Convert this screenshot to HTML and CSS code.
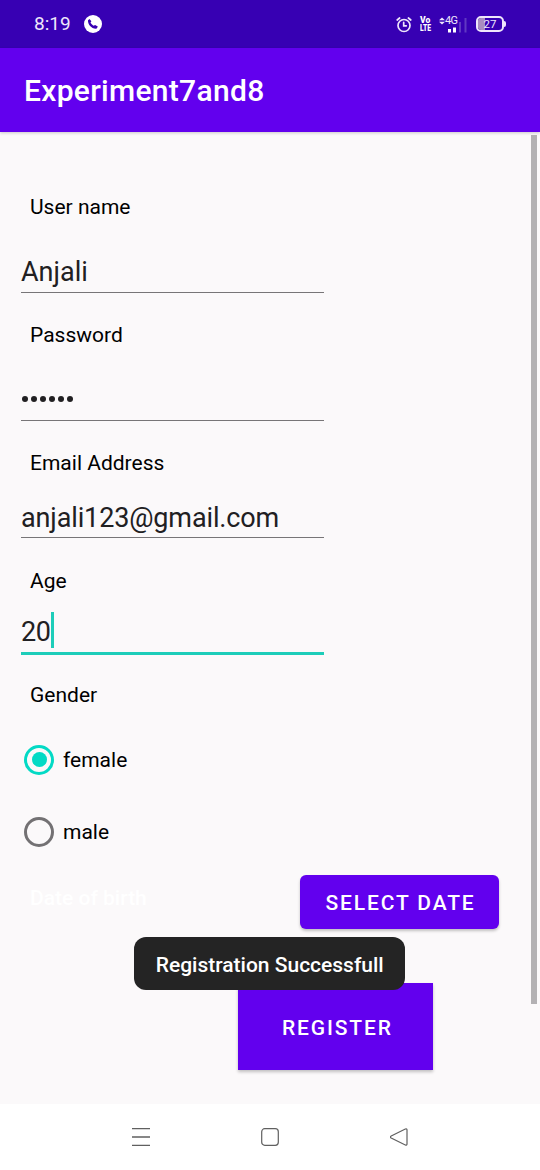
FILE: index.html
```html
<!DOCTYPE html>
<html lang="en">
<head>
<meta charset="utf-8">
<title>Experiment7and8</title>
<link rel="stylesheet" href="styles.css">
</head>
<body>
<div class="screen">
  <header class="status">
    <span class="clock">8:19</span>
    <svg class="call" width="18" height="18" viewBox="0 0 18 18"><circle cx="9" cy="9" r="9" fill="#fff"/><path d="M4 5.300 5.500 4l1.900 2.300-.9 1.300c.8 1.500 1.700 2.400 3.100 3.100l1.500-.7 2.700 1.600-1 2C8 14.300 3.600 9.800 4 5.300z" fill="#3700b3"/></svg>
    <div class="indicators">
      <svg class="alarm" width="16" height="17" viewBox="0 0 16 17" fill="none" stroke="#eee6fb" stroke-width="1.700" stroke-linecap="round"><circle cx="8" cy="9.500" r="6"/><path d="M1.200 4 3.600 2M14.800 4 12.400 2M7.700 6.300V9.800h2.600"/></svg>
      <div class="volte"><span>Vo</span><span>LTE</span></div>
      <div class="network">
        <div class="network-type"><svg width="6" height="8" viewBox="0 0 6 8" fill="#eee6fb"><path d="M0 3.300 3 .4l3 2.900zM0 4.700h6L3 7.600z"/></svg><span>4G</span></div>
        <svg class="bars" width="20" height="16" viewBox="0 0 20 16"><path d="M1 12h3v3.500H1zM6 10.500h3v5H6z" fill="#fff"/><path d="M12 5h2v10.500h-2zM17.500 1h2v14.500h-2z" fill="#6038c2"/></svg>
      </div>
      <div class="battery"><span class="battery-level"></span><span class="battery-text">27</span></div>
    </div>
  </header>
  <div class="appbar"><h1>Experiment7and8</h1></div>
  <main class="form">
    <div class="field"><label>User name</label><div class="value">Anjali</div></div>
    <div class="field"><label>Password</label><div class="value password"><i></i><i></i><i></i><i></i><i></i><i></i></div></div>
    <div class="field email"><label>Email Address</label><div class="value">anjali123@gmail.com</div></div>
    <div class="field age"><label>Age</label><div class="value active"><span class="number">20</span><span class="caret"></span></div></div>
    <label class="gender">Gender</label>
    <div class="radio"><span class="ring checked"></span><span>female</span></div>
    <div class="radio"><span class="ring"></span><span>male</span></div>
    <div class="date-row"><span class="dob">Date of birth</span><button class="btn select">SELECT DATE</button></div>
    <button class="btn register">REGISTER</button>
    <div class="toast">Registration Successfull</div>
    <div class="scrollbar"></div>
  </main>
  <nav class="nav">
    <svg width="18" height="18" viewBox="0 0 18 18"><path d="M0 .7h18M0 9h18M0 17.300h18" stroke="#606060" stroke-width="1.300"/></svg>
    <svg width="18" height="18" viewBox="0 0 18 18"><rect x=".7" y=".7" width="16.600" height="16.600" rx="3" fill="none" stroke="#606060" stroke-width="1.200"/></svg>
    <svg width="18" height="18" viewBox="0 0 18 18"><path d="M1.200 8 15.300 1Q17 .4 17 2V16Q17 17.600 15.300 17L1.200 10Q-.4 9 1.200 8z" fill="none" stroke="#606060" stroke-width="1.200"/></svg>
  </nav>
</div>
</body>
</html>
```
FILE: styles.css
```css
* { box-sizing: border-box; }
body { margin: 0; font-family: Roboto, sans-serif; color: #000; }
.screen { width: 540px; height: 1170px; display: flex; flex-direction: column; background: #fbf9fa; overflow: hidden; }
.status { height: 48px; flex: none; background: #3700b3; display: flex; align-items: center; padding: 0 34px 0 34px; color: #eee6fb; }
.clock { font-size: 19px; letter-spacing: 0; line-height: 24px; width: 50px; }
.indicators { margin-left: auto; display: flex; align-items: center; }
.volte { display: flex; flex-direction: column; margin-left: 8px; width: 12px; font-size: 9px; font-weight: 900; line-height: 8px; color: #fff; }
.volte span { transform-origin: left center; white-space: nowrap; }
.volte span:first-child { transform: scaleX(.95); }
.volte span:last-child { transform: scaleX(.75); }
.network { position: relative; width: 28px; height: 17px; margin-left: 7px; display: flex; align-items: flex-end; justify-content: flex-end; }
.network-type { position: absolute; left: 0; top: 0; display: flex; align-items: center; font-size: 11px; line-height: 10px; letter-spacing: -0.7px; }
.battery { position: relative; display: flex; align-items: center; justify-content: center; width: 28px; height: 16px; margin-left: 9px; margin-right: 2px; border: 2px solid #eee6fb; border-radius: 5px; font-size: 11.5px; }
.battery::after { content: ""; position: absolute; right: -4px; top: 3px; width: 2px; height: 6px; border-radius: 0 2px 2px 0; background: #eee6fb; }
.battery-level { position: absolute; left: 0; top: 0; bottom: 0; width: 7px; background: #a98cc0; border-radius: 3px 0 0 3px; }
.battery-text { position: relative; }
.appbar { height: 84px; flex: none; background: #6200ee; display: flex; align-items: center; padding: 2px 24px 0; color: #fff; box-shadow: 0 1px 3px rgba(0,0,0,.2); }
.appbar h1 { margin: 0; font-size: 30px; line-height: 36px; font-weight: 500; letter-spacing: .3px; }
.form { position: relative; flex: 1; padding: 61px 21px 0; display: flex; flex-direction: column; align-items: flex-start; }
.field { width: 303px; height: 128px; display: flex; flex-direction: column; padding-bottom: 28px; }
.field.email { height: 118px; padding-bottom: 29px; }
.field.age { height: 114px; padding-bottom: 26px; }
label { font-size: 21px; line-height: 28px; padding-left: 9px; }
.value { display: flex; align-items: center; height: 39px; margin-top: auto; padding-bottom: 1px; border-bottom: 1.5px solid #777577; font-size: 27px; line-height: 35px; color: #212022; }
.email .value { letter-spacing: -0.13px; padding-bottom: 0; }
.value.active { height: 43px; border-bottom: 3px solid #1dcdb9; padding-bottom: 4px; }
.number { padding-top: 4px; letter-spacing: -0.3px; }
.caret { width: 3px; height: 36px; background: #1dcdb9; }
.password { gap: 3px; padding-left: 1px; padding-bottom: 4px; }
.password i { width: 6px; height: 6px; border-radius: 50%; background: #212022; }
.gender { margin-bottom: 15px; }
.radio { height: 72px; display: flex; align-items: center; gap: 9px; padding-left: 3px; font-size: 21px; line-height: 28px; }
.ring { width: 30px; height: 30px; margin-bottom: 1px; border: 3px solid #737173; border-radius: 50%; display: flex; align-items: center; justify-content: center; }
.ring.checked { border-color: #03dac5; }
.ring.checked::after { content: ""; width: 15px; height: 15px; border-radius: 50%; background: #03dac5; }
.date-row { width: 478px; height: 54px; margin-top: 7px; display: flex; justify-content: space-between; align-items: flex-start; padding-left: 9px; }
.dob { font-size: 21px; line-height: 28px; font-weight: 500; color: #fff; margin-top: 9px; }
.btn { border: 0; padding: 0; background: #6200ee; color: #fff; font-family: Roboto, sans-serif; font-size: 21px; font-weight: 500; letter-spacing: 1.875px; box-shadow: 0 2px 3px rgba(0,0,0,.23); }
.select { width: 199px; height: 54px; border-radius: 6px; padding: 2px 0 0 2px; }
.register { width: 195px; height: 87px; margin: 54px 0 0 217.400px; padding: 2px 0 0 3px; }
.toast { position: absolute; left: 134px; top: 805.400px; width: 271.400px; height: 53px; border-radius: 12px; background: #242424; color: #fff; display: flex; align-items: center; justify-content: center; font-size: 21px; font-weight: 500; padding-top: 2px; }
.scrollbar { position: absolute; right: 3px; top: 3px; width: 6px; height: 869px; background: #b3b1b3; }
.nav { height: 66px; flex: none; background: #fff; display: flex; align-items: center; justify-content: space-between; padding: 0 132px; }
```
